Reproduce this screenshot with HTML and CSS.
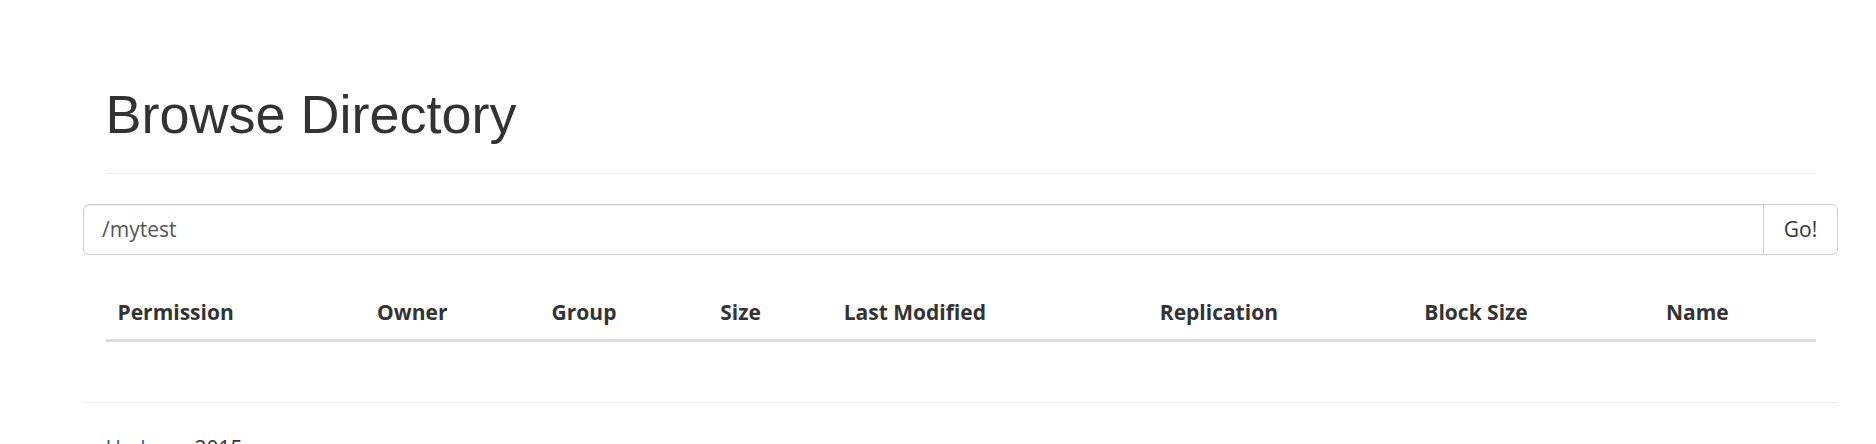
FILE: index.html
```html
<!DOCTYPE html>
<html>
<head>
<meta charset="utf-8">
<title>Browsing HDFS</title>
<link rel="stylesheet" href="styles.css">
</head>
<body>
<div class="container">
  <div class="page-header">
    <h1>Browse Directory</h1>
  </div>
  <div class="row">
    <form class="nav-form">
      <div class="input-group">
        <input type="text" class="form-control" value="/mytest">
        <button class="btn" type="button">Go!</button>
      </div>
    </form>
  </div>
  <div class="panel">
    <table class="table">
      <thead>
        <tr>
          <th class="c-perm">Permission</th>
          <th class="c-owner">Owner</th>
          <th class="c-group">Group</th>
          <th class="c-size">Size</th>
          <th class="c-mod">Last Modified</th>
          <th class="c-rep">Replication</th>
          <th class="c-block">Block Size</th>
          <th class="c-name">Name</th>
        </tr>
      </thead>
      <tbody></tbody>
    </table>
  </div>
  <div class="row">
    <hr class="footer-rule">
    <div class="footer-col"><p><a href="#">Hadoop</a>, 2015.</p></div>
  </div>
</div>
</body>
</html>
```
FILE: styles.css
```css
* { box-sizing: border-box; }
html, body { margin: 0; padding: 0; background: #fff; }
body {
  font-family: "Open Sans", "Noto Sans", sans-serif;
  font-size: 21px;
  line-height: 30px;
  color: #333;
  overflow: hidden;
}
.container {
  margin-left: 83px;
  width: 1755px;
  padding: 0 22.5px;
  display: flow-root;
}
.page-header {
  margin: 85px 0 30px;
  padding-bottom: 13.5px;
  border-bottom: 1px solid #eee;
}
.page-header h1 {
  margin: 0 0 15px;
  font-family: "Liberation Sans", Arial, sans-serif;
  font-weight: 400;
  font-size: 54px;
  line-height: 1.1;
  color: #333;
}
.row { margin: 0 -22.5px; display: flow-root; }
.nav-form { margin: 0; }
.input-group { display: flex; height: 51px; }
.form-control {
  flex: 1;
  height: 51px;
  margin: 0;
  padding: 9px 18px;
  font-family: "Open Sans", "Noto Sans", sans-serif;
  font-size: 21px;
  line-height: 30px;
  color: #555;
  background: #fff;
  border: 1px solid #ccc;
  border-radius: 6px 0 0 6px;
  box-shadow: inset 0 1px 1px rgba(0,0,0,.075);
  outline: none;
}
.btn {
  width: 75px;
  height: 51px;
  margin: 0 0 0 -1px;
  padding: 0;
  font-family: "Open Sans", "Noto Sans", sans-serif;
  font-size: 21px;
  line-height: 30px;
  color: #333;
  background: #fff;
  border: 1px solid #ccc;
  border-radius: 0 6px 6px 0;
}
.panel { margin-top: 30px; display: flow-root; }
.table {
  width: 100%;
  border-collapse: collapse;
  border-spacing: 0;
  table-layout: fixed;
  margin-bottom: 30px;
}
.table th {
  padding: 12px;
  text-align: left;
  vertical-align: bottom;
  font-weight: 700;
  line-height: 30px;
  border-bottom: 3px solid #ddd;
  white-space: nowrap;
}
.c-perm { width: 259.5px; }
.c-owner { width: 174.5px; }
.c-group { width: 168.5px; }
.c-size { width: 123.5px; }
.c-mod { width: 316px; }
.c-rep { width: 264.5px; }
.c-block { width: 241.5px; }
.c-name { width: 161.5px; }
.footer-rule {
  margin: 30px 0;
  border: 0;
  border-top: 1px solid #eee;
  height: 0;
}
.footer-col { padding: 0 22.5px; }
.footer-col p {
  margin: 0 0 15px;
}
.footer-col a { color: #2a6496; text-decoration: none; }
```
